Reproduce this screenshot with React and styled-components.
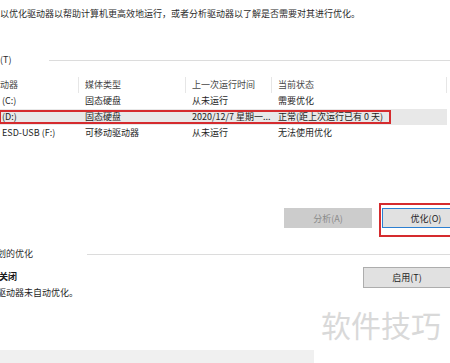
import styled, { createGlobalStyle } from "styled-components";

const GlobalStyle = createGlobalStyle`
  html, body {
    margin: 0;
    padding: 0;
    background: #ffffff;
    overflow: hidden;
  }
  body {
    font-family: "Noto Sans CJK SC", "Noto Sans", sans-serif;
    font-size: 9px;
    color: #1e1e1e;
  }
`;

const Page = styled.div`
  position: relative;
  width: 450px;
  height: 363px;
  overflow: hidden;
  display: flex;
  flex-direction: column;
`;

const Intro = styled.div`
  margin-top: 8px;
  line-height: 12px;
  color: #2b2b2b;
  white-space: nowrap;
`;

const Clipped = styled.span`
  display: inline-block;
  margin-left: ${(p) => p.$shift || 0}px;
`;

const GroupHeading = styled.div`
  display: flex;
  align-items: center;
  gap: ${(p) => p.$gap}px;
  margin-top: ${(p) => p.$top}px;
  line-height: 12px;
  color: #2b2b2b;
  white-space: nowrap;

  &::after {
    content: "";
    flex: 1;
    height: 1px;
    background: #dcdcdc;
  }
`;

const Table = styled.div`
  margin-top: 11px;
  display: grid;
  grid-template-columns: 79px 107px 86px 175px;
`;

const HeaderCell = styled.div`
  height: 16px;
  line-height: 16px;
  padding-left: ${(p) => (p.$first ? 0 : 6)}px;
  border-right: 1px solid #e6e6e6;
  color: #474747;
  white-space: nowrap;
`;

const Row = styled.div`
  position: relative;
  grid-column: 1 / -1;
  display: grid;
  grid-template-columns: subgrid;
  height: 16px;
  line-height: 16px;
  background: ${(p) => (p.$selected ? "#e8e8e8" : "transparent")};
`;

const Cell = styled.div`
  padding-left: ${(p) => (p.$first ? 2 : 6)}px;
  white-space: nowrap;
  overflow: hidden;
  color: #1e1e1e;
`;

const RedFrame = styled.div`
  position: absolute;
  left: ${(p) => p.$left}px;
  top: ${(p) => p.$top}px;
  width: ${(p) => p.$width}px;
  height: ${(p) => p.$height}px;
  border: 2px solid #d52b2e;
  box-sizing: border-box;
  pointer-events: none;
`;

const ButtonRow = styled.div`
  margin-top: 67px;
  display: flex;
  gap: 10px;
  padding-left: 284px;
`;

const ButtonSlot = styled.div`
  position: relative;
  flex-shrink: 0;
`;

const Button = styled.div`
  flex-shrink: 0;
  width: 88px;
  height: 20px;
  box-sizing: border-box;
  display: flex;
  align-items: center;
  justify-content: center;
  font-size: 9px;
  background: ${(p) => (p.$disabled ? "#cccccc" : "#e1e1e1")};
  color: ${(p) => (p.$disabled ? "#8a8a8a" : "#1e1e1e")};
  border: 1px solid
    ${(p) => (p.$disabled ? "#cccccc" : p.$focused ? "#2c7fd1" : "#adadad")};
`;

const ScheduleRow = styled.div`
  margin-top: 7px;
  display: flex;
  justify-content: space-between;
  align-items: flex-start;
`;

const ScheduleText = styled.div`
  padding-top: 4px;
  display: flex;
  flex-direction: column;
  gap: 4px;
  line-height: 12px;
`;

const Status = styled.div`
  font-weight: bold;
  color: #1a1a1a;
`;

const EnableButton = styled(Button)`
  height: 21px;
  margin-right: -1px;
`;

const BottomBar = styled.div`
  margin-top: auto;
  width: 314px;
  height: 13px;
  background: #f0f0f0;
`;

const Watermark = styled.div`
  position: absolute;
  left: 321px;
  top: 306px;
  font-size: 30px;
  line-height: 36px;
  color: #d9d9d9;
  white-space: nowrap;
`;

const drives = [
  { name: "(C:)", media: "固态硬盘", last: "从未运行", status: "需要优化" },
  {
    name: "(D:)",
    media: "固态硬盘",
    last: "2020/12/7 星期一...",
    status: "正常(距上次运行已有 0 天)",
    selected: true,
  },
  { name: "ESD-USB (F:)", media: "可移动驱动器", last: "从未运行", status: "无法使用优化" },
];

export default function App() {
  return (
    <>
      <GlobalStyle />
      <Page>
        <Intro>以优化驱动器以帮助计算机更高效地运行，或者分析驱动器以了解是否需要对其进行优化。</Intro>

        <GroupHeading $top={34} $gap={38}>
          <span>(T)</span>
        </GroupHeading>

        <Table>
          <HeaderCell $first>动器</HeaderCell>
          <HeaderCell>媒体类型</HeaderCell>
          <HeaderCell>上一次运行时间</HeaderCell>
          <HeaderCell>当前状态</HeaderCell>
          {drives.map((d) => (
            <Row key={d.name} $selected={d.selected}>
              <Cell $first>{d.name}</Cell>
              <Cell>{d.media}</Cell>
              <Cell>{d.last}</Cell>
              <Cell>{d.status}</Cell>
              {d.selected && <RedFrame $left={-1} $top={1} $width={392} $height={14} />}
            </Row>
          ))}
        </Table>

        <ButtonRow>
          <Button $disabled>分析(A)</Button>
          <ButtonSlot>
            <Button $focused>优化(O)</Button>
            <RedFrame $left={-3} $top={-5} $width={100} $height={34} />
          </ButtonSlot>
        </ButtonRow>

        <GroupHeading $top={20} $gap={54}>
          <Clipped $shift={-3}>划的优化</Clipped>
        </GroupHeading>

        <ScheduleRow>
          <ScheduleText>
            <Status>
              <Clipped $shift={-1}>关闭</Clipped>
            </Status>
            <div>
              <Clipped $shift={-3}>驱动器未自动优化。</Clipped>
            </div>
          </ScheduleText>
          <EnableButton>启用(T)</EnableButton>
        </ScheduleRow>

        <BottomBar />
        <Watermark>软件技巧</Watermark>
      </Page>
    </>
  );
}
